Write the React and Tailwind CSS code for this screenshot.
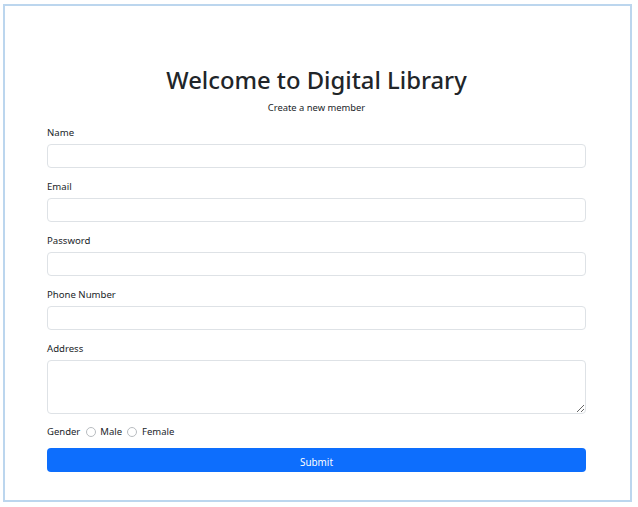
import React from "react";

function Field({ label, children }) {
  return (
    <div className="flex flex-col">
      <label className="text-[9.6px] leading-[16px] pt-[2px] mb-[3px] text-[#212529]">{label}</label>
      {children}
    </div>
  );
}

export default function App() {
  const inputCls =
    "w-full h-[24px] rounded-[4px] border border-[#dee2e6] bg-white outline-none";
  return (
    <div
      className="w-[638px] h-[507px] bg-white pt-[4px] pl-[3px]"
      style={{ fontFamily: '"Noto Sans", "Open Sans", sans-serif' }}
    >
      <div className="w-[629px] h-[498px] border-2 border-[#bcd6ee] pl-[42px] pr-[44px] pt-[58px] text-[#212529]">
        <h2 className="text-center text-[23.8px] leading-[32px] font-medium">Welcome to Digital Library</h2>
        <p className="text-center text-[9.4px] leading-[16px] mt-[4px]">Create a new member</p>
        <div className="mt-[7px] flex flex-col gap-[9px]">
          <Field label="Name">
            <input className={inputCls} />
          </Field>
          <Field label="Email">
            <input className={inputCls} />
          </Field>
          <Field label="Password">
            <input type="password" className={inputCls} />
          </Field>
          <Field label="Phone Number">
            <input className={inputCls} />
          </Field>
          <Field label="Address">
            <textarea className="w-full h-[54px] rounded-[4px] border border-[#dee2e6] bg-white outline-none block" />
          </Field>
        </div>
        <div className="mt-[10px] flex items-center h-[16px] text-[9.5px] leading-[16px]">
          <span>Gender</span>
          <span className="ml-[6px] w-[10px] h-[10px] rounded-full border border-[#b8bcc0] bg-white" />
          <span className="ml-[4px]">Male</span>
          <span className="ml-[5px] w-[10px] h-[10px] rounded-full border border-[#b8bcc0] bg-white" />
          <span className="ml-[5px]">Female</span>
        </div>
        <button className="mt-[8px] w-full h-[24px] rounded-[4px] bg-[#0d6efd] text-white text-[9.9px] leading-[24px] pt-[2px]">
          Submit
        </button>
      </div>
    </div>
  );
}
